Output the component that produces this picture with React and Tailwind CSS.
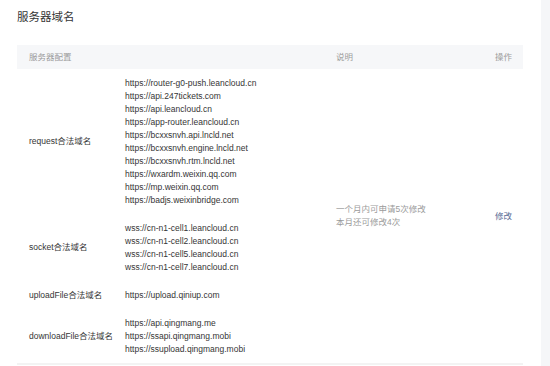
import React from "react";

const rows = [
  {
    label: "request合法域名",
    urls: [
      "https://router-g0-push.leancloud.cn",
      "https://api.247tickets.com",
      "https://api.leancloud.cn",
      "https://app-router.leancloud.cn",
      "https://bcxxsnvh.api.lncld.net",
      "https://bcxxsnvh.engine.lncld.net",
      "https://bcxxsnvh.rtm.lncld.net",
      "https://wxardm.weixin.qq.com",
      "https://mp.weixin.qq.com",
      "https://badjs.weixinbridge.com",
    ],
  },
  {
    label: "socket合法域名",
    urls: [
      "wss://cn-n1-cell1.leancloud.cn",
      "wss://cn-n1-cell2.leancloud.cn",
      "wss://cn-n1-cell5.leancloud.cn",
      "wss://cn-n1-cell7.leancloud.cn",
    ],
  },
  { label: "uploadFile合法域名", urls: ["https://upload.qiniup.com"] },
  {
    label: "downloadFile合法域名",
    urls: [
      "https://api.qingmang.me",
      "https://ssapi.qingmang.mobi",
      "https://ssupload.qingmang.mobi",
    ],
  },
];

const rowStart = ["row-start-1", "row-start-2", "row-start-3", "row-start-4"];

export default function App() {
  return (
    <div
      className="flex w-[550px] h-[366px] bg-white overflow-hidden"
      style={{ fontFamily: '"Liberation Sans", "Noto Sans CJK SC", sans-serif' }}
    >
      <div className="flex-1 pl-[17px] pr-[18px]">
        <div className="pt-[9px] h-[45px] text-[11.5px] leading-[16px] text-[#353535]">
          服务器域名
        </div>
        <div className="grid grid-cols-[96px_211px_159px_40px] h-[24px] items-center bg-[#f6f7f9] text-[8.5px] text-[#9b9b9b]">
          <div className="pl-[12px] col-span-2">服务器配置</div>
          <div className="pl-[12px]">说明</div>
          <div className="pl-[12px]">操作</div>
        </div>
        <div className="grid grid-cols-[96px_211px_159px_40px] border-b-2 border-[#f3f3f3] text-[8.5px] leading-[13px] text-[#353535]">
          {rows.map((r, i) => (
            <React.Fragment key={r.label}>
              <div className={`col-start-1 ${rowStart[i]} pl-[12px] self-center whitespace-nowrap`}>
                {r.label}
              </div>
              <div className={`col-start-2 ${rowStart[i]} pl-[12px] py-[7.5px] whitespace-nowrap`}>
                {r.urls.map((u) => (
                  <div key={u}>{u}</div>
                ))}
              </div>
            </React.Fragment>
          ))}
          <div className="col-start-3 row-start-1 row-span-4 self-center pl-[12px] text-[#9b9b9b]">
            <div>一个月内可申请5次修改</div>
            <div>本月还可修改4次</div>
          </div>
          <div className="col-start-4 row-start-1 row-span-4 self-center pl-[12px] text-[#576b95] whitespace-nowrap">
            修改
          </div>
        </div>
      </div>
      <div className="w-[9px] h-full bg-[#f5f6f8]" />
    </div>
  );
}
